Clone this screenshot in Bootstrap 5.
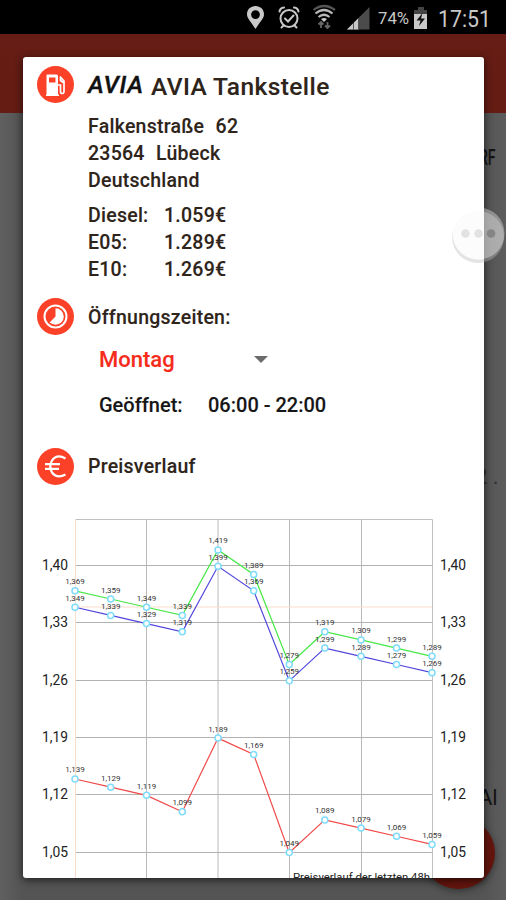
<!DOCTYPE html>
<html lang="de">
<head>
<meta charset="utf-8">
<meta name="viewport" content="width=device-width, initial-scale=1">
<title>AVIA Tankstelle</title>
<link href="https://cdn.jsdelivr.net/npm/bootstrap@5.3.0/dist/css/bootstrap.min.css" rel="stylesheet">
<style>
body{font-family:Roboto,"Liberation Sans",sans-serif;background:#5e5e5e;color:#2e241a;height:900px;width:506px}
.status{height:34px;background:#000;color:#c4c4c4}
.appbar{height:79px;background:linear-gradient(#651d15,#641c13)}
.pane{top:113px;left:0;width:506px;height:787px;background:linear-gradient(90deg,#606060,#545454 22px,#545454 484px,#5d5d5d)}
.peek{color:#141414;font-size:22px;line-height:24px;white-space:nowrap}
.peek-a{left:479px;top:146px;font-size:22px;font-weight:500;transform:scaleX(.64);transform-origin:0 0}
.peek-b{left:475px;top:465px;color:#303030}.peek-c{left:478px;top:786px}
.fab{left:422px;top:817px;width:73px;height:72px;background:#64150d;box-shadow:0 2px 7px #333}
.dialog{width:461px;height:821px;margin:-56px 0 0 23px;background:#fff;border-radius:3px;box-shadow:0 2px 9px rgba(0,0,0,.65);font-weight:500;font-size:19.500px;line-height:27px;letter-spacing:.25px;-webkit-text-stroke:.1px currentColor}
.head-row{height:56px;padding:0 14px}
.bullet{width:37px;height:37px;flex:none;margin-top:-2px}
.brand{font:italic 500 24.500px/30px Roboto,sans-serif;color:#111;width:63px;margin-left:14px;letter-spacing:.7px;-webkit-text-stroke:.4px #111}
.station{font-size:24.500px;line-height:30px;letter-spacing:.42px;padding-top:3px}
.details{padding-left:65px}
.address{height:81px;margin-top:-.5px}
.street{word-spacing:.6px}
.price-label{width:76px}
.sect{margin-left:14px}
.times span.sect{padding-top:2px}
.day{color:#f52c1c;font-size:22px;width:155px;letter-spacing:0}
.hours{color:#161616;padding-left:76px;font-size:20px;letter-spacing:0}
.caret{width:14px;height:7px}
.chart{font-family:Roboto,sans-serif;font-weight:400;letter-spacing:0;-webkit-text-stroke:0;margin-top:25px}
.assist{left:452px;top:207px;width:53px;height:57px}
.prices{margin-top:8px}
.times{margin-top:15.500px;height:37px}
.times .bullet,.trend .bullet{margin-top:0}
.day-row{margin-top:9px;height:30px}
.open-row{margin-top:18px}
.open-label{width:109px}
.trend{margin-top:29px;height:37px}
</style>
<script src="https://cdn.jsdelivr.net/npm/bootstrap@5.3.0/dist/js/bootstrap.bundle.min.js"></script>
</head>
<body class="position-relative overflow-hidden m-0">
<div class="position-absolute pane"></div>
<div class="position-absolute peek peek-a">RF</div>
<div class="position-absolute peek peek-b">2 .</div>
<div class="position-absolute peek peek-c">Al</div>
<div class="position-absolute rounded-circle fab"></div>

<header class="status position-relative d-flex justify-content-end">
<svg width="266" height="34" viewBox="240 0 266 34" fill="#c8c8c8" font-family="Roboto,sans-serif">
  <path fill-rule="evenodd" d="M255.500 6c-5 0-8.500 3.600-8.500 8.200 0 4.500 4.500 8 8.500 14.800 4-6.800 8.500-10.300 8.500-14.800 0-4.600-3.500-8.200-8.500-8.200zm0 4.200a4.400 4.400 0 1 1 0 8.800 4.400 4.400 0 0 1 0-8.800z"/>
  <g fill="none" stroke="#c8c8c8" stroke-width="2" stroke-linecap="round"><circle cx="289" cy="18.500" r="8.500"/><path d="M285 18.500l3 3 5.500-6M279.500 11.500q.5-3.500 4.500-4M298.500 11.500q-.5-3.500-4.500-4M283.500 25.500l-2 2M294.500 25.500l2 2"/></g>
  <g fill="none" stroke="#b8b8b8" stroke-width="2.200"><path stroke="#555" d="M313.500 10q10.500-8 21.500 0"/><path d="M315.500 13.500q8.500-7 17 0M318.500 17q5.500-4.500 11 0"/></g><path d="M321 19q3-2 6 0l-3 3z"/>
  <path d="M321 28v-6M318.500 24.500L321 22l2.500 2.500M327.500 22v6M325 25.500l2.500 2.500 2.500-2.500" fill="none" stroke="#666" stroke-width="1.800"/>
  <path d="M347 29.500L369.500 7v22.500z" fill="#4b4b4b"/><path d="M347 29.500l11-11v11z"/><path d="M353.500 23v7M358.500 18v12" stroke="#555"/>
  <text x="378" y="24" font-size="16" textLength="31" lengthAdjust="spacingAndGlyphs">74%</text>
  <path d="M418 7h6v3h-6zM414 10h13v5h-13z" fill="#444"/><path d="M414 14h13v15h-13z"/><path d="M422.500 13l-6 7.500h4l-1.500 5.500 6-7.500h-4z" fill="#111"/>
  <text x="438" y="26.500" font-size="24" textLength="53" lengthAdjust="spacingAndGlyphs">17:51</text>
</svg>
</header>
<div class="appbar position-relative"></div>

<main class="dialog position-relative overflow-hidden d-flex flex-column">
  <div class="head-row d-flex align-items-center">
    <svg class="bullet" viewBox="0 0 37 37"><circle cx="18.500" cy="18.500" r="18.500" fill="#fb4128"/><path fill="#fff" fill-rule="evenodd" d="M10 8.500h9.500q1.500 0 1.500 1.500v18.500h1v1.500H9v-1.500h.5V9zM12 11.500v5h6.500v-5z"/><path d="M21 19h2.500v6.500q0 2 1.700 2t1.800-2V15l-4-4.500M23.500 11v3.500l3.500 2.500" fill="none" stroke="#fff" stroke-width="1.700"/></svg>
    <div class="brand">AVIA</div><div class="station">AVIA Tankstelle</div>
  </div>
  <section class="details">
    <div class="address"><div class="street">Falkenstraße&nbsp; 62</div><div class="street">23564&nbsp; Lübeck</div><div>Deutschland</div></div>
    <div class="prices">
      <div class="d-flex"><div class="price-label">Diesel:</div><div>1.059€</div></div>
      <div class="d-flex"><div class="price-label">E05:</div><div>1.289€</div></div>
      <div class="d-flex"><div class="price-label ps-sm-0">E10:</div><div>1.269€</div></div>
    </div>
  </section>
  <div class="sect times d-flex align-items-center">
    <svg class="bullet" viewBox="0 0 37 37"><circle cx="18.500" cy="18.500" r="18.500" fill="#fb4128"/><circle cx="18.500" cy="18.500" r="11" fill="none" stroke="#fff" stroke-width="2"/><circle cx="18.500" cy="18.500" r="8.300" fill="#fff"/><path d="M18.500 18.500V9.500a9 9 0 0 0-6.400 15.400z" fill="#fb4128"/></svg>
    <span class="sect">Öffnungszeiten:</span>
  </div>
  <div class="hours day-row d-flex align-items-center"><span class="day">Montag</span><svg class="caret" viewBox="0 0 14 7"><path d="M0 0h14L7 7z" fill="#6c6c6c"/></svg></div>
  <div class="hours open-row d-flex"><span class="open-label">Geöffnet:</span><span class="open-time">06:00 - 22:00</span></div>
  <div class="sect trend d-flex align-items-center">
    <svg class="bullet" viewBox="0 0 37 37"><circle cx="18.500" cy="18.500" r="18.500" fill="#fb4128"/><path d="M28.500 10.500Q20 5.500 15 12.500q-3.500 6 0 12 5 6.500 13.500 2M8 16.200h15M8 20.800h14" fill="none" stroke="#fff" stroke-width="2.200"/></svg>
    <span class="sect">Preisverlauf</span>
  </div>
  <svg class="chart d-block" width="461" height="368" viewBox="23 510 461 368"></svg>
</main>

<svg class="position-absolute assist" viewBox="0 0 53 57"><defs><clipPath id="overCard"><path d="M0 0H32V57H0z"/></clipPath></defs><circle cx="26" cy="30" r="26" fill="#bbb" opacity=".4"/><circle cx="26.500" cy="26.500" r="26" fill="#fff" opacity=".35"/><circle cx="26.500" cy="26.500" r="26" fill="#fff" opacity=".8" clip-path="url(#overCard)"/><g fill="#e2e2e2"><circle cx="13.500" cy="26.500" r="4.300"/><circle cx="26.500" cy="26.500" r="4.300"/><circle cx="39" cy="26.500" r="4.300" fill="#858585"/></g></svg>
<script>
const xs=[75,110.700,146.500,182.300,218,253.700,289.300,324.800,361,396.500,432];
const yOf=v=>565.500+(1.4-v)*818;
const series=[
 {c:'#46e846',v:[1.369,1.359,1.349,1.339,1.419,1.389,1.279,1.319,1.309,1.299,1.289]},
 {c:'#5046dc',v:[1.349,1.339,1.329,1.319,1.399,1.369,1.259,1.299,1.289,1.279,1.269]},
 {c:'#f04a4a',v:[1.139,1.129,1.119,1.099,1.189,1.169,1.049,1.089,1.079,1.069,1.059]}];
let s='';
for(const x of [146.500,218,289.500,361.500])s+=`<path d="M${x} 519.500V878" stroke="#b9b9b9"/>`;
s+='<path d="M75 519.500H432.500M432.500 519.500V878" stroke="#c0c0c0" fill="none"/>';
[1.40,1.33,1.26,1.19,1.12,1.05].forEach((v,i)=>{const y=Math.floor(565.2+i*57.4)+.5,t=v.toFixed(2).replace('.',',');
 s+=`<path d="M75 ${y}H432.500" stroke="#b2b2b2"/>`;
 for(const x of [42,440])s+=`<text x="${x}" y="${y+4.5}" font-size="14.500" fill="#222" textLength="26" lengthAdjust="spacingAndGlyphs">${t}</text>`;});
s+='<path d="M75.500 519V878M75 607H432" stroke="#fbdcc8" fill="none"/>';
for(const r of series){
 s+=`<polyline points="${r.v.map((v,i)=>xs[i]+','+yOf(v)).join(' ')}" fill="none" stroke="${r.c}" stroke-width="1.200"/>`;
 r.v.forEach((v,i)=>{s+=`<text x="${xs[i]}" y="${yOf(v)-6.5}" font-size="8" fill="#333" text-anchor="middle">${v.toFixed(3).replace('.',',')}</text>`});
}
for(const r of series)r.v.forEach((v,i)=>{s+=`<circle cx="${xs[i]}" cy="${yOf(v)}" r="3" fill="#fff" stroke="#7fdcfa" stroke-width="1.500"/>`});
s+='<text x="293" y="881" font-size="11" fill="#222" textLength="137" lengthAdjust="spacingAndGlyphs">Preisverlauf der letzten 48h</text>';
document.querySelector('.chart').innerHTML=s;
</script>
</body>
</html>
